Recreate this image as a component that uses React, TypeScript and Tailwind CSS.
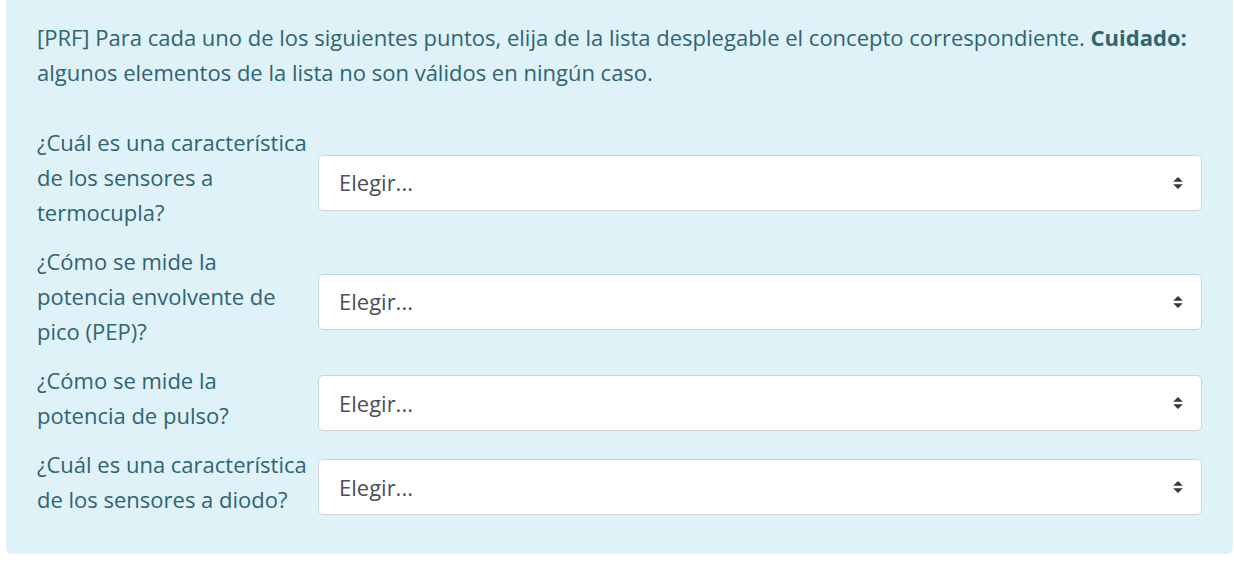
const questions = [
  ["¿Cuál es una característica", "de los sensores a", "termocupla?"],
  ["¿Cómo se mide la", "potencia envolvente de", "pico (PEP)?"],
  ["¿Cómo se mide la", "potencia de pulso?"],
  ["¿Cuál es una característica", "de los sensores a diodo?"],
];

function SelectArrow() {
  return (
    <svg width="10" height="12" viewBox="0 0 4 5" className="pointer-events-none absolute right-[19px] top-1/2 -translate-y-1/2">
      <path fill="#343a40" d="M2 0L0 2h4zm0 5L0 3h4z" />
    </svg>
  );
}

export default function App() {
  return (
    <div className="min-h-screen bg-white pl-[6px] pr-[1px] font-['Open_Sans',sans-serif]">
      <div className="rounded-b-md bg-[#def2f8] px-[31px] pt-[20px] pb-[37px] text-[22px] leading-[35px] text-[#2f6473]">
        <p className="mb-[35px]">
          [PRF] Para cada uno de los siguientes puntos, elija de la lista desplegable el concepto correspondiente.{" "}
          <strong className="font-bold">Cuidado:</strong> algunos elementos de la lista no son válidos en ningún caso.
        </p>
        <div className="flex flex-col gap-[14px]">
          {questions.map((lines) => (
            <div key={lines.join(" ")} className="flex items-center">
              <div className="w-[281px] shrink-0 whitespace-nowrap">
                {lines.map((l, i) => (
                  <div key={i}>{l}</div>
                ))}
              </div>
              <div className="relative mt-[10px] flex-1">
                <select className="h-[56px] w-full appearance-none rounded-[5px] border border-[#ced4da] bg-white pl-[20px] text-[22px] text-[#495057] outline-none">
                  <option>Elegir...</option>
                </select>
                <SelectArrow />
              </div>
            </div>
          ))}
        </div>
      </div>
    </div>
  );
}
